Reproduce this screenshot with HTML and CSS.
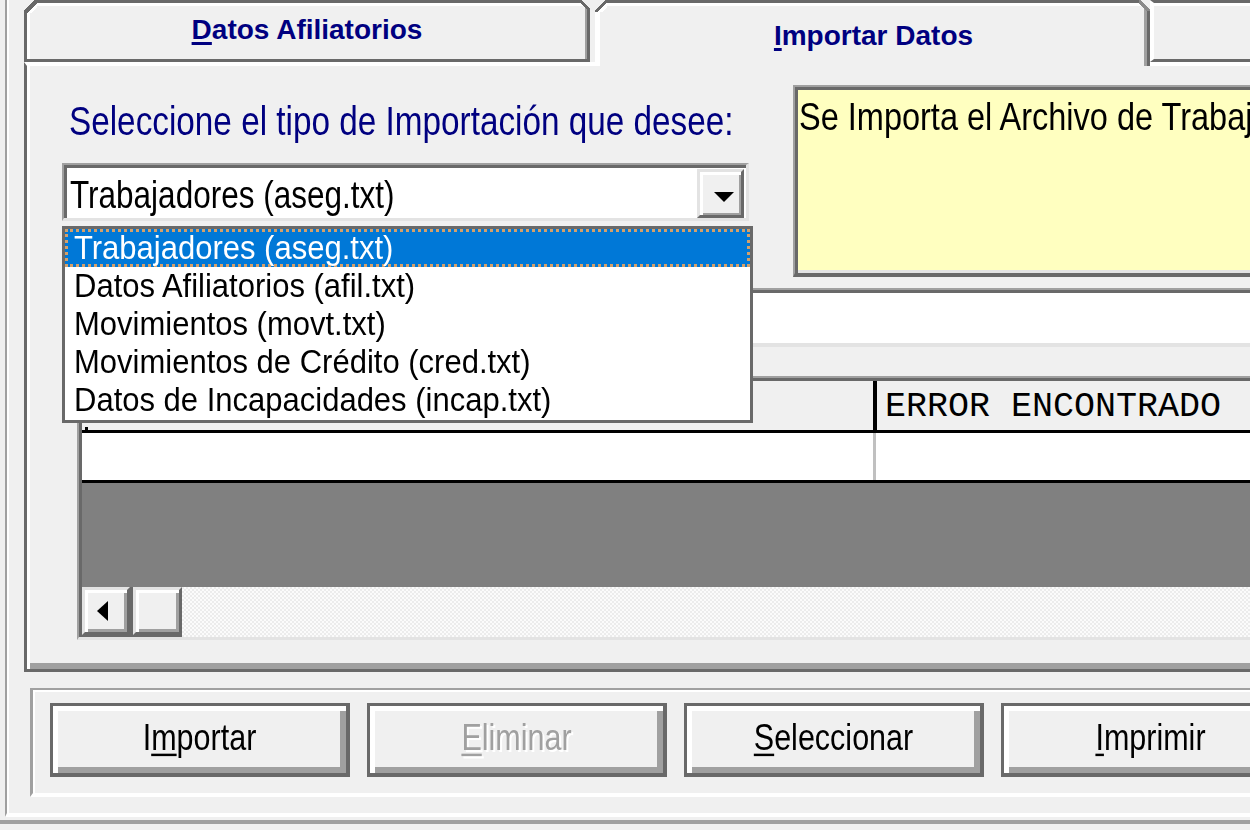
FILE: index.html
```html
<!DOCTYPE html>
<html lang="es">
<head>
<meta charset="utf-8">
<title>Importar Datos</title>
<link rel="stylesheet" href="styles.css">
</head>
<body>
<div class="outer">
  <div class="tabctl">
    <div class="tabrow">
      <div class="tab tab-first"><span class="tablabel"><u>D</u>atos Afiliatorios</span></div>
      <div class="tab tab-active"><span class="tablabel"><u>I</u>mportar Datos</span></div>
      <div class="tab tab-third"></div>
    </div>
    <div class="panel">
      <div class="top">
        <div class="left">
          <div class="label"><span class="tall">Seleccione el tipo de Importación que desee:</span></div>
          <div class="combo">
            <span class="combo-text"><span class="tall">Trabajadores (aseg.txt)</span></span>
            <span class="combo-btn"><span class="arrow-down"></span></span>
          </div>
        </div>
        <div class="info"><span class="tall">Se Importa el Archivo de Trabajadores (aseg.txt)</span></div>
      </div>
      <div class="textbox"></div>
      <div class="grid">
        <div class="grid-inner">
          <div class="ghead">
            <div class="gcol1"><span class="tick"></span></div>
            <div class="gcol2">ERROR ENCONTRADO</div>
          </div>
          <div class="grow">
            <div class="gcol1"></div>
            <div class="gcol2"></div>
          </div>
          <div class="gempty"></div>
          <div class="hscroll">
            <span class="sbtn"><span class="arrow-left"></span></span>
            <span class="sbtn sthumb"></span>
            <span class="strack"></span>
          </div>
        </div>
      </div>
      <ul class="droplist">
        <li class="sel"><span class="tall">Trabajadores (aseg.txt)</span></li>
        <li><span class="tall">Datos Afiliatorios (afil.txt)</span></li>
        <li><span class="tall">Movimientos (movt.txt)</span></li>
        <li><span class="tall">Movimientos de Crédito (cred.txt)</span></li>
        <li><span class="tall">Datos de Incapacidades (incap.txt)</span></li>
      </ul>
    </div>
  </div>
  <div class="btngroup">
    <div class="btn"><span class="tall">I<u>m</u>portar</span></div>
    <div class="btn disabled"><span class="tall"><u>E</u>liminar</span></div>
    <div class="btn"><span class="tall"><u>S</u>eleccionar</span></div>
    <div class="btn"><span class="tall"><u>I</u>mprimir</span></div>
  </div>
</div>
<div class="statusline"></div>
</body>
</html>
```
FILE: styles.css
```css
* { box-sizing: border-box; }
html, body { margin: 0; padding: 0; }
body {
  width: 1250px;
  height: 830px;
  overflow: hidden;
  background: #f0f0f0;
  color: #000;
  font-family: "Liberation Sans", Arial, sans-serif;
}

/* MS Sans Serif at 3x is tall and narrow: stretch Arial metrics vertically */
.tall {
  display: inline-block;
  line-height: 1;
  transform: scaleY(1.22);
  transform-origin: 0 85%;
  white-space: nowrap;
}

.outer {
  margin-left: 5px;
  height: 817px;
  border-left: 2px solid #a0a0a0;
  border-bottom: 4px solid #fff;
  box-shadow: inset 2px 0 0 #fff;
  padding-left: 17px;
}

.tabctl { width: 1320px; }

/* ---------- tabs ---------- */
.tabrow { display: flex; height: 62px; align-items: flex-start; }
.tab {
  position: relative;
  flex: none;
  height: 62px;
  text-align: center;
  background: #f0f0f0;
}
.tablabel {
  display: block;
  font-weight: bold;
  font-size: 28px;
  line-height: 28px;
  color: #000080;
  white-space: nowrap;
}
.tablabel u { text-decoration-thickness: 3px; text-underline-offset: 3px; }

.tab-first {
  width: 566px;
  border: 3px solid #696969;
  box-shadow: inset 3px 3px 0 #fff, inset -2px 0 0 #a0a0a0;
  padding-top: 13px;
}
.tab-first::before {
  content: "";
  position: absolute;
  left: -3px; top: -3px;
  width: 13px; height: 13px;
  background: linear-gradient(135deg, #f0f0f0 0 42%, #696969 42% 62%, #fff 62% 78%, transparent 78%);
}
.tab-first::after {
  content: "";
  position: absolute;
  right: -3px; top: -3px;
  width: 10px; height: 10px;
  background: linear-gradient(225deg, #f0f0f0 0 42%, #696969 42% 64%, transparent 64%);
}

.tab-active {
  z-index: 1;
  width: 555px;
  height: 66px;
  margin-left: 5px;
  margin-bottom: -4px;
  border-top: 3px solid #696969;
  border-left: 5px solid #fff;
  border-right: 3px solid #696969;
  box-shadow: inset 0 3px 0 #fff, inset -3px 0 0 #a0a0a0;
  padding-top: 19px;
}
.tab-active::before {
  content: "";
  position: absolute;
  left: -5px; top: -3px;
  width: 12px; height: 12px;
  background: linear-gradient(135deg, #f0f0f0 0 42%, #696969 42% 60%, #fff 60% 80%, transparent 80%);
}
.tab-active::after {
  content: "";
  position: absolute;
  right: -3px; top: -3px;
  width: 11px; height: 11px;
  background: linear-gradient(225deg, #f0f0f0 0 42%, #8a8a8a 42% 64%, transparent 64%);
}

.tab-third {
  width: 200px;
  border-top: 3px solid #696969;
  border-bottom: 3px solid #696969;
  border-left: 4px solid #fff;
  box-shadow: inset 0 3px 0 #fff;
}

/* ---------- panel ---------- */
.panel {
  position: relative;
  height: 610px;
  border-left: 3px solid #696969;
  border-top: 4px solid #fff;
  border-bottom: 3px solid #696969;
  box-shadow: inset 3px 0 0 #fff, inset 0 -6px 0 #a0a0a0;
  padding: 19px 0 0 35px;
}

.top { display: flex; height: 192px; }
.left { flex: none; width: 687px; }

.label {
  margin-top: 19px;
  padding-left: 7px;
  font-size: 33.3px;
  line-height: 40px;
  color: #000080;
  white-space: nowrap;
}

.combo {
  margin-top: 19px;
  height: 58px;
  display: flex;
  align-items: flex-end;
  background: #fff;
  border-top: 2px solid #a0a0a0;
  border-left: 2px solid #a0a0a0;
  border-right: 3px solid #e3e3e3;
  border-bottom: 3px solid #e3e3e3;
  box-shadow: inset 3px 3px 0 #696969;
  padding-left: 6px;
  padding-right: 2px;
}
.combo-text {
  flex: 1;
  font-size: 31.5px;
  line-height: 38px;
  margin-bottom: 2px;
  white-space: nowrap;
}
.combo-btn {
  flex: none;
  width: 47px;
  height: 49px;
  display: flex;
  align-items: center;
  justify-content: center;
  padding: 6px 0 0 6px;
  background: #f0f0f0;
  border-top: 3px solid #e3e3e3;
  border-left: 3px solid #e3e3e3;
  border-right: 3px solid #696969;
  border-bottom: 3px solid #696969;
  box-shadow: inset 3px 3px 0 #fff, inset -2px -2px 0 #a0a0a0;
}
.arrow-down {
  width: 0; height: 0;
  border-left: 10px solid transparent;
  border-right: 10px solid transparent;
  border-top: 10px solid #000;
}

.info {
  flex: none;
  width: 620px;
  margin-left: 44px;
  height: 192px;
  background: #ffffc0;
  border-top: 2px solid #a0a0a0;
  border-left: 2px solid #a0a0a0;
  border-bottom: 4px solid #696969;
  box-shadow: inset 3px 3px 0 #696969, inset 0 -3px 0 #e3e3e3;
  padding: 12px 0 0 4px;
  font-size: 32.5px;
  line-height: 40px;
  white-space: nowrap;
  overflow: hidden;
}

.textbox {
  margin-top: 11px;
  margin-left: 15px;
  height: 59px;
  background: #fff;
  border-top: 2px solid #a0a0a0;
  border-bottom: 4px solid #e3e3e3;
  box-shadow: inset 0 3px 0 #696969;
}

/* ---------- grid ---------- */
.grid {
  margin-top: 29px;
  margin-left: 15px;
  height: 264px;
  border-top: 2px solid #a0a0a0;
  border-left: 2px solid #a0a0a0;
  border-bottom: 3px solid #e3e3e3;
}
.grid-inner {
  height: 100%;
  border-top: 3px solid #696969;
  border-left: 3px solid #696969;
}
.ghead, .grow { display: flex; }
.ghead {
  height: 52px;
  border-bottom: 3px solid #000;
  background: #f0f0f0;
}
.ghead .gcol1 {
  width: 795px;
  border-right: 4px solid #000;
  display: flex;
  align-items: flex-end;
  padding-left: 3px;
}
.tick { width: 3px; height: 3px; background: #000; }
.ghead .gcol2 {
  flex: 1;
  padding: 2px 0 0 8px;
  font-family: "Liberation Mono", "Courier New", monospace;
  font-size: 35px;
  line-height: 49px;
  white-space: nowrap;
}
.grow {
  height: 50px;
  border-bottom: 3px solid #000;
  background: #fff;
}
.grow .gcol1 { width: 794px; border-right: 3px solid #c0c0c0; }
.grow .gcol2 { flex: 1; }
.gempty { height: 104px; background: #808080; }

.hscroll {
  display: flex;
  height: 50px;
  background: #696969;
}
.sbtn {
  flex: none;
  width: 48px;
  height: 48px;
  display: flex;
  align-items: center;
  justify-content: center;
  background: #f0f0f0;
  border-top: 3px solid #e3e3e3;
  border-left: 3px solid #e3e3e3;
  border-right: 3px solid #696969;
  border-bottom: 3px solid #696969;
  box-shadow: inset 3px 3px 0 #fff, inset -3px -3px 0 #a0a0a0;
  padding-right: 8px;
}
.sthumb { margin-left: 3px; width: 49px; }
.arrow-left {
  width: 0; height: 0;
  border-top: 10px solid transparent;
  border-bottom: 10px solid transparent;
  border-right: 11px solid #000;
}
.strack {
  flex: 1;
  background-color: #f4f4f4;
  background-image: repeating-conic-gradient(#fbfbfb 0 25%, #ececec 0 50%);
  background-size: 4px 4px;
}

/* ---------- dropdown list ---------- */
.droplist {
  position: absolute;
  z-index: 2;
  left: 35px;
  top: 160px;
  width: 691px;
  height: 197px;
  margin: 0;
  padding: 0;
  list-style: none;
  background: #fff;
  border: 3px solid #696969;
}
.droplist li {
  height: 38px;
  padding: 1px 0 0 9px;
  font-size: 31px;
  line-height: 37px;
  white-space: nowrap;
}
.droplist .tall { transform: scaleY(1.09); }
.droplist li.sel {
  background: #0078d7;
  color: #fff;
  outline: 3px dotted #d4a06a;
  outline-offset: -3px;
}

/* ---------- buttons ---------- */
.btngroup {
  display: flex;
  gap: 17px;
  width: 1320px;
  margin-top: 16px;
  margin-left: 6px;
  height: 109px;
  border-top: 2px solid #a0a0a0;
  border-left: 3px solid #a0a0a0;
  border-bottom: 4px solid #fff;
  box-shadow: inset 2px 2px 0 #fff;
  padding: 13px 0 0 17px;
}
.btn {
  flex: none;
  width: 300px;
  height: 74px;
  display: flex;
  align-items: center;
  justify-content: center;
  background: #f0f0f0;
  border-top: 3px solid #696969;
  border-left: 3px solid #696969;
  border-right: 4px solid #696969;
  border-bottom: 4px solid #696969;
  box-shadow: inset 5px 5px 0 #fff, inset -6px -6px 0 #a0a0a0;
  font-size: 30.5px;
  white-space: nowrap;
}
.btn u { text-decoration-thickness: 2px; text-underline-offset: 3px; }
.btn.disabled { color: #a0a0a0; text-shadow: 2px 2px 0 #fff; }

.statusline {
  margin-top: 3px;
  border-top: 4px solid #a0a0a0;
}
```
